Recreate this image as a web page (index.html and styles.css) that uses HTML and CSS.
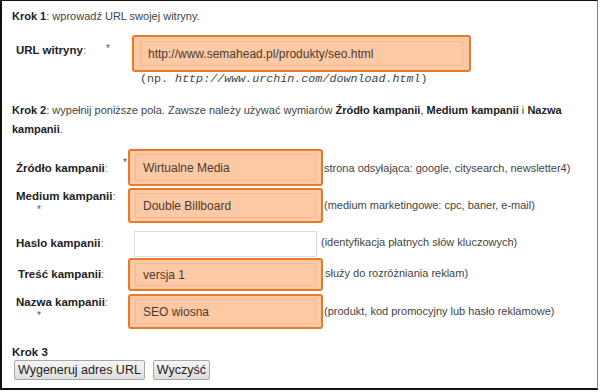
FILE: index.html
```html
<!DOCTYPE html>
<html lang="pl">
<head>
<meta charset="utf-8">
<link rel="stylesheet" href="styles.css">
</head>
<body>
<div class="frame">
  <p class="step step1"><b>Krok 1</b>: wprowadź URL swojej witryny.</p>

  <div class="row url-row">
    <div class="label url-label"><b>URL witryny</b>:</div>
    <div class="star url-star">*</div>
    <div class="hl url-hl"><div class="inp">http://www.semahead.pl/produkty/seo.html</div></div>
  </div>
  <div class="example">(np. <i>http://www.urchin.com/download.html</i>)</div>

  <p class="step step2"><b>Krok 2</b>: wypełnij poniższe pola. Zawsze należy używać wymiarów <b>Źródło kampanii</b>, <b>Medium kampanii</b> i <b>Nazwa kampanii</b>.</p>

  <div class="row r-src">
    <div class="label"><b>Źródło kampanii</b>:</div>
    <div class="star star-inline">*</div>
    <div class="hl"><div class="inp">Wirtualne Media</div></div>
    <div class="help">strona odsyłająca: google, citysearch, newsletter4)</div>
  </div>

  <div class="row r-med">
    <div class="label stacked"><span><b>Medium kampanii</b>:</span><span class="star-below">*</span></div>
    <div class="hl"><div class="inp">Double Billboard</div></div>
    <div class="help">(medium marketingowe: cpc, baner, e-mail)</div>
  </div>

  <div class="row r-term">
    <div class="label"><b>Haslo kampanii</b>:</div>
    <div class="plain"></div>
    <div class="help help-plain">(identyfikacja płatnych słów kluczowych)</div>
  </div>

  <div class="row r-content">
    <div class="label label-content"><b>Treść kampanii</b>:</div>
    <div class="hl"><div class="inp">versja 1</div></div>
    <div class="help">służy do rozróżniania reklam)</div>
  </div>

  <div class="row r-name">
    <div class="label stacked"><span><b>Nazwa kampanii</b>:</span><span class="star-below">*</span></div>
    <div class="hl"><div class="inp">SEO wiosna</div></div>
    <div class="help">(produkt, kod promocyjny lub hasło reklamowe)</div>
  </div>

  <p class="step step3"><b>Krok 3</b></p>
  <div class="buttons">
    <button class="btn">Wygeneruj adres URL</button>
    <button class="btn">Wyczyść</button>
  </div>
</div>
</body>
</html>
```
FILE: styles.css
```css
* { box-sizing: border-box; }
html, body { margin: 0; padding: 0; background: #fff; }
body {
  width: 600px;
  height: 392px;
  font-family: "Liberation Sans", Arial, sans-serif;
  color: #333;
}
.frame {
  width: 598px;
  height: 390px;
  border-left: 2px solid #111;
  border-top: 1px solid #111;
  border-bottom: 2px solid #111;
  border-right: 1px solid #888;
  padding: 0 0 0 10px;
}
.step {
  margin: 0;
  font-size: 11px;
  line-height: 13px;
  color: #444;
}
.step b { color: #222; }
.step1 { padding-top: 9px; }
.row { display: flex; align-items: flex-start; }
.label {
  font-size: 11.5px;
  color: #777;
  line-height: 14px;
}
.label b { color: #222; }
.url-row { margin-top: 12px; height: 37px; }
.url-label { width: 92px; padding-left: 4px; padding-top: 8px; }
.star { font-size: 10px; color: #555; }
.url-star { width: 28px; padding-top: 8px; padding-left: 2px; }
.hl {
  border: 2px solid #e87a2c;
  border-radius: 3px;
  background: #fdc8a4;
  padding: 3px 5px;
  width: 195px;
}
.url-hl { width: 339px; height: 37px; padding: 4px 6px; }
.inp {
  border: 1px solid #f3b995;
  height: 100%;
  font-size: 12px;
  color: #4b3a30;
  padding: 0 0 0 7px;
  display: flex;
  align-items: center;
}
.example {
  margin-left: 128px;
  margin-top: 0;
  font-family: "Liberation Mono", "Courier New", monospace;
  font-size: 11.7px;
  line-height: 14px;
  color: #444;
}
.step2 { margin-top: 15px; line-height: 19px; width: 565px; }
.r-src { margin-top: 10px; height: 37px; }
.r-src .label { width: 111px; padding-left: 4px; padding-top: 12px; }
.star-inline { width: 5px; padding-top: 8px; }
.r-src .hl { height: 37px; }
.help { font-size: 11px; color: #444; padding-left: 1px; }
.r-src .help { padding-top: 13px; }
.r-med { margin-top: 2px; height: 35px; }
.stacked { display: flex; flex-direction: column; width: 116px; padding-left: 4px; padding-top: 1px; }
.star-below { font-size: 10px; color: #555; padding-left: 21px; line-height: 14px; }
.r-med .hl { height: 35px; }
.r-med .help { padding-top: 11px; }
.r-term { margin-top: 8px; height: 26px; }
.r-term .label { width: 122px; padding-left: 4px; padding-top: 5px; }
.plain { width: 183px; height: 26px; border: 1px solid #ddd; background: #fff; }
.help-plain { padding-left: 4px; padding-top: 5px; }
.r-content { margin-top: 1px; height: 33px; }
.label-content { width: 116px; padding-left: 6px; padding-top: 9px; }
.r-content .hl { height: 33px; }
.r-content .help { padding-top: 9px; padding-left: 2px; }
.r-name { margin-top: 3px; height: 35px; }
.r-name .hl { height: 35px; }
.r-name .help { padding-top: 11px; }
.step3 { margin-top: 17px; font-size: 11.5px; }
.buttons { display: flex; gap: 8px; margin-top: 1px; padding-left: 2px; }
.btn {
  font-family: "Liberation Sans", Arial, sans-serif;
  font-size: 12.5px;
  color: #222;
  height: 20px;
  padding: 0 3px;
  border: 1px solid #a8a8a8;
  border-radius: 2px;
  background: linear-gradient(#f6f6f6, #dcdcdc);
}
```
